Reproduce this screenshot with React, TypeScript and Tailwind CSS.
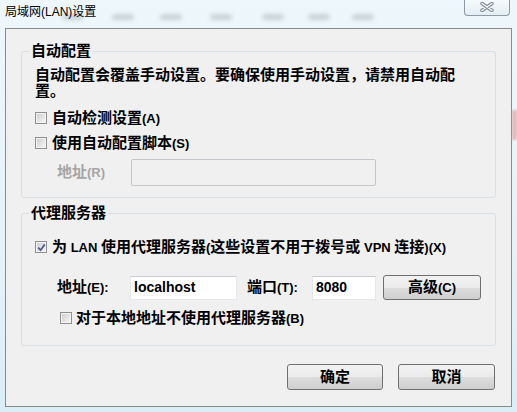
import type { ReactNode } from "react"

// Latin runs are set a bit smaller than the CJK text, like the old dialog font
function T({ s }: { s: string }) {
  const parts = s.split(/([\x20-\x7e]+)/).filter(Boolean)
  return (
    <>
      {parts.map((p, i) =>
        /^[\x20-\x7e]+$/.test(p) ? (
          <span key={i} className="text-[13px]">
            {p}
          </span>
        ) : (
          <span key={i}>{p}</span>
        )
      )}
    </>
  )
}

function Check({ checked = false }: { checked?: boolean }) {
  return (
    <span className="relative flex h-[12px] w-[12px] shrink-0 items-center justify-center border border-[#8e8f8f] bg-[#f4f4f4]">
      <span className="h-[8px] w-[8px] bg-gradient-to-br from-[#cfcfcf] to-[#f5f5f5]" />
      {checked && (
        <svg className="absolute left-[1px] top-[1px]" width="9" height="9" viewBox="0 0 9 9">
          <path d="M1.2 4.6 L3.6 7.2 L7.8 1.4" fill="none" stroke="#4b5e94" strokeWidth="1.8" />
        </svg>
      )}
    </span>
  )
}

function WinButton({ label, className = "" }: { label: string; className?: string }) {
  return (
    <button
      className={`flex items-center justify-center rounded-[3px] border border-[#707070] bg-[linear-gradient(#f2f2f2_0%,#ebebeb_50%,#dddddd_51%,#cfcfcf_100%)] text-[15px] font-bold text-black ${className}`}
    >
      <T s={label} />
    </button>
  )
}

function Group({ title, children, className = "" }: { title: string; children: ReactNode; className?: string }) {
  return (
    <fieldset className={`ml-[15px] w-[475px] rounded-[3px] border border-[#d5dfe5] p-0 pl-[13px] ${className}`}>
      <legend className="-ml-[6px] px-[2px] text-[15px] font-bold leading-[16px]">{title}</legend>
      {children}
    </fieldset>
  )
}

export default function App() {
  const blurs = [62, 112, 160, 210, 262, 308, 352]

  return (
    <div className="relative h-[412px] w-[517px] overflow-hidden bg-[linear-gradient(180deg,#eef7fb_0%,#e6f2f8_60%,#d9eef6_100%)] font-['Liberation_Sans','Noto_Sans_CJK_SC',sans-serif] text-black">
      {/* blurred desktop behind the glass frame */}
      {blurs.map((x) => (
        <span
          key={x}
          className="absolute top-[14px] h-[6px] w-[22px] rounded-full bg-[#9aa8b2] opacity-45 blur-[2px]"
          style={{ left: x }}
        />
      ))}
      <span className="absolute right-0 top-[110px] h-[30px] w-[5px] bg-[#e4a0a0] opacity-70 blur-[1px]" />

      <div className="relative flex h-[28px] items-start justify-between">
        <div className="pl-[5px] pt-[4px] text-[12px] leading-[16px]">局域网(LAN)设置</div>
        <div className="mr-[7px] -mt-px flex h-[17px] w-[46px] items-center justify-center rounded-b-[4px] border border-t-0 border-[#8d99a6] bg-[linear-gradient(#f7fbfd,#e3eef4)]">
          <svg width="14" height="10" viewBox="0 0 14 10">
            <path d="M2 1.5 L12 8.5 M12 1.5 L2 8.5" stroke="#7d8690" strokeWidth="3.4" strokeLinecap="round" />
            <path d="M2 1.5 L12 8.5 M12 1.5 L2 8.5" stroke="#ffffff" strokeWidth="1.4" strokeLinecap="round" />
          </svg>
        </div>
      </div>

      <div className="ml-[5px] flex h-[379px] w-[507px] flex-col border border-[#8a8a8a] bg-[#f0f0f0]">
        <Group title="自动配置" className="mt-[14px] h-[155px]">
          <p className="mt-[8px] w-[428px] text-[15px] font-bold leading-[16px]">
            自动配置会覆盖手动设置。要确保使用手动设置，请禁用自动配置。
          </p>
          <div className="mt-[9px] flex h-[20px] items-center gap-[5px] text-[15px] font-bold">
            <Check />
            <span>
              <T s="自动检测设置(A)" />
            </span>
          </div>
          <div className="mt-[5px] flex h-[20px] items-center gap-[5px] text-[15px] font-bold">
            <Check />
            <span>
              <T s="使用自动配置脚本(S)" />
            </span>
          </div>
          <div className="mt-[6px] flex items-center">
            <span className="ml-[22px] w-[74px] text-[15px] font-bold text-[#a5a5a5]">
              <T s="地址(R)" />
            </span>
            <div className="h-[27px] w-[245px] rounded-[2px] border border-[#c3c6cb] bg-[#f0f0f0]" />
          </div>
        </Group>

        <Group title="代理服务器" className="mt-[7px] h-[141px]">
          <div className="mt-[16px] flex h-[20px] items-center gap-[5px] text-[15px] font-bold">
            <Check checked />
            <span>
              <T s="为 LAN 使用代理服务器(这些设置不用于拨号或 VPN 连接)(X)" />
            </span>
          </div>
          <div className="mt-[18px] flex items-center text-[15px] font-bold">
            <span className="ml-[22px] w-[73px]">
              <T s="地址(E):" />
            </span>
            <div className="flex h-[24px] w-[107px] items-center border border-[#e3e6ea] border-t-[#c9ccd2] bg-white pl-[3px] text-[14px]">
              localhost
            </div>
            <span className="ml-[10px] w-[65px]">
              <T s="端口(T):" />
            </span>
            <div className="flex h-[24px] w-[64px] items-center border border-[#e3e6ea] border-t-[#c9ccd2] bg-white pl-[3px] text-[14px]">
              8080
            </div>
            <WinButton label="高级(C)" className="ml-[7px] h-[25px] w-[98px]" />
          </div>
          <div className="ml-[25px] mt-[8px] flex h-[20px] items-center gap-[4px] text-[15px] font-bold">
            <Check />
            <span>
              <T s="对于本地地址不使用代理服务器(B)" />
            </span>
          </div>
        </Group>

        <div className="mr-[16px] mt-[18px] flex justify-end gap-[15px]">
          <WinButton label="确定" className="h-[26px] w-[96px]" />
          <WinButton label="取消" className="h-[26px] w-[97px]" />
        </div>
      </div>
    </div>
  )
}
